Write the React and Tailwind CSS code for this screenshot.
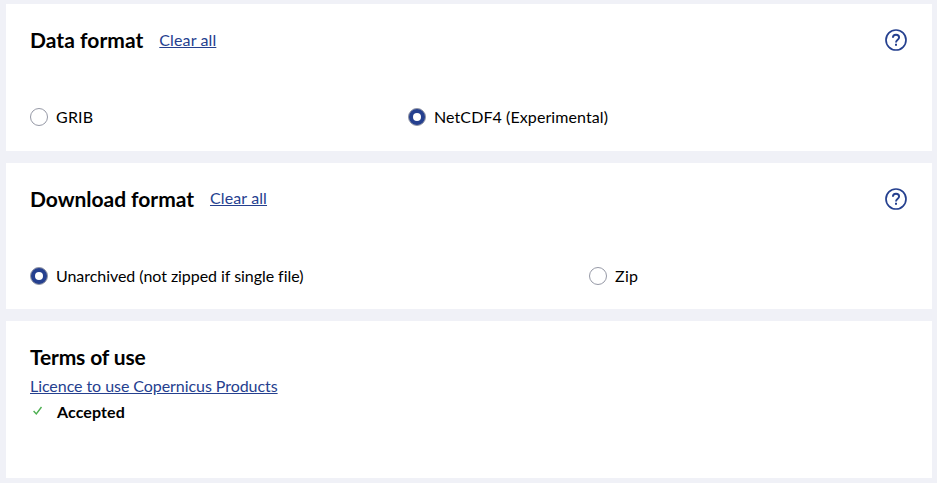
function Help() {
  return (
    <svg className="block size-6" viewBox="0 0 24 24" fill="none" stroke="#25408f">
      <circle cx="12" cy="12" r="10" strokeWidth="1.7" />
      <path d="M8.9 9.7C8.9 7.8 10.2 6.8 12 6.8s3.1 1.1 3.1 2.8c0 2.1-3.1 2.3-3.1 4.8" strokeWidth="1.9" />
      <path d="M12 15.7v2" strokeWidth="2" />
    </svg>
  );
}

function Option({ label, checked, tracking }) {
  return (
    <label className="flex h-6 items-center gap-2">
      {checked ? (
        <span className="flex size-[18px] items-center justify-center rounded-full border border-[#9699a6] bg-[#25408f]">
          <span className="size-2 rounded-full bg-white" />
        </span>
      ) : (
        <span className="size-[18px] rounded-full border border-[#9699a6] bg-white" />
      )}
      <span className={tracking}>{label}</span>
    </label>
  );
}

function Header({ title, tracking, linkPosition }) {
  return (
    <div className="flex h-6 items-center justify-between">
      <div className="flex h-6 items-start gap-4">
        <h2 className={`text-[21px] leading-6 font-bold ${tracking}`}>{title}</h2>
        <a className={`tracking-[0.12px] text-[#25408f] underline ${linkPosition}`}>Clear all</a>
      </div>
      <Help />
    </div>
  );
}

export default function App() {
  return (
    <main className="flex h-[483px] w-[937px] flex-col gap-3 bg-[#f0f1f7] pt-1 pr-[5px] pb-[5px] pl-1.5 font-['Lato',sans-serif] text-base leading-6 text-black">
      <section className="h-[147px] bg-white px-6 pt-6">
        <Header title="Data format" tracking="tracking-[0.04px]" linkPosition="mt-0" />
        <div className="mt-[53px] flex">
          <div className="w-[378px]"><Option label="GRIB" tracking="tracking-[0.2px]" /></div>
          <Option label="NetCDF4 (Experimental)" checked tracking="tracking-[0.09px]" />
        </div>
      </section>
      <section className="h-[146px] bg-white px-6 pt-6">
        <Header title="Download format" tracking="tracking-[-0.03px]" linkPosition="-mt-px" />
        <div className="mt-[53px] flex">
          <div className="w-[559px]"><Option label="Unarchived (not zipped if single file)" checked tracking="tracking-[-0.05px]" /></div>
          <Option label="Zip" tracking="tracking-[0.3px]" />
        </div>
      </section>
      <section className="h-[157px] bg-white px-6 pt-6">
        <h2 className="text-[21px] leading-6 font-bold tracking-[-0.15px]">Terms of use</h2>
        <a className="mt-[5px] block tracking-[-0.06px] text-[#25408f] underline">Licence to use Copernicus Products</a>
        <div className="mt-0.5 flex items-center">
          <svg className="mr-[11px] size-4" viewBox="0 0 16 16" fill="none" stroke="#4caf50" strokeWidth="1.4"><path d="M3.6 7l2.7 3 5.2-7" /></svg>
          <strong className="font-bold tracking-[0.1px]">Accepted</strong>
        </div>
      </section>
    </main>
  );
}
